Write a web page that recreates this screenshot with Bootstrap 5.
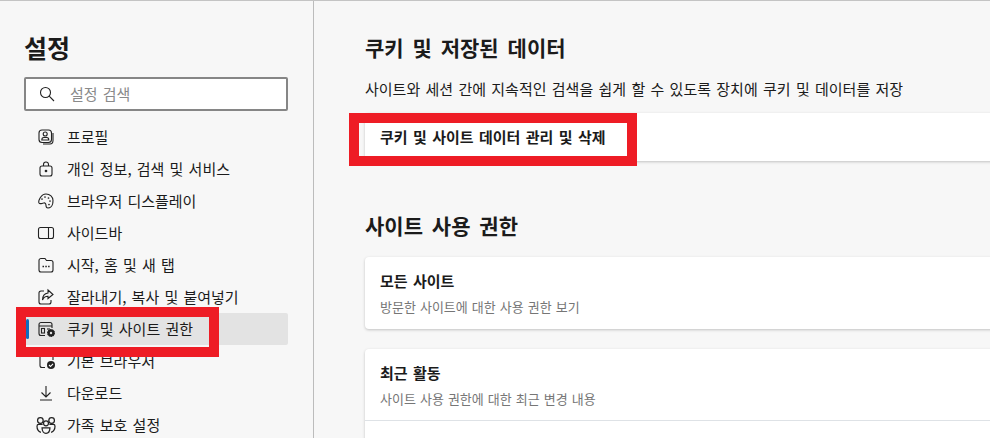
<!DOCTYPE html>
<html lang="ko">
<head>
<meta charset="UTF-8">
<title>설정</title>
<link href="https://cdn.jsdelivr.net/npm/bootstrap@5.3.0/dist/css/bootstrap.min.css" rel="stylesheet">
<style>
    html, body { height: 100%; }
    body {
        background: #f7f7f7;
        color: #1b1b1b;
        font-family: "Noto Sans CJK KR", "Noto Sans", sans-serif;
        overflow: hidden;
        border-top: 1px solid #c4c4c4;
    }
    .shell { height: 437px; overflow: hidden; }
    .side {
        width: 314px;
        flex: none;
        border-right: 1px solid #bcbcbc;
        padding: 28px 25px 0 24px;
    }
    .side-title { font-size: 25px; font-weight: 700; line-height: 36px; margin: 0 0 12px; }
    .search-box {
        height: 34px;
        width: 264px;
        background: #fff;
        border: 2px solid #868686;
        border-radius: 2px;
        padding-left: 13px;
        gap: 15px;
        font-size: 15px;
        word-spacing: 1px;
        color: #8a8a8a;
        margin-bottom: 10px;
    }
    .menu-row {
        height: 32px;
        width: 264px;
        font-size: 15px;
        word-spacing: 1px;
        padding-left: 14px;
        gap: 13px;
        border-radius: 2px;
        position: relative;
    }
    .menu-row svg { flex: none; overflow: visible; }
    .menu-row svg.fam-ico { margin: 0 -1px; }
    .menu-row.active { background: #e3e3e3; }
    .menu-row.active::before {
        content: "";
        position: absolute;
        left: 2px; top: 6px;
        width: 3px; height: 20px;
        background: #0f6cbd;
        border-radius: 2px;
    }
    .ico { fill: none; stroke: #222; stroke-width: 1.1; }
    .main { padding: 31px 0 0 51px; min-width: 0; flex: 1; }
    .sec-title { font-size: 21px; font-weight: 700; line-height: 30px; word-spacing: 3px; margin: 0 0 17px; }
    .sec-desc { font-size: 15px; word-spacing: 1.1px; line-height: 20px; margin: 0 0 14px; white-space: nowrap; }
    .pane {
        background: #fff;
        border-radius: 4px 0 0 4px;
        box-shadow: 0 1px 3px rgba(0,0,0,.22);
        margin-right: -8px;
    }
    .pane-row { padding: 0 15px; }
    .pane-name { font-size: 15px; font-weight: 700; line-height: 20px; word-spacing: 1.2px; }
    .pane-sub { font-size: 13px; color: #767676; line-height: 18px; margin-top: 7px; word-spacing: .4px; }
    .first-row { height: 48px; }
    .second-title { margin-top: 49px; margin-bottom: 17px; }
    .site-row { height: 72px; padding-top: 14px; }
    .recent-pane { margin-top: 20px; }
    .spare-row { height: 40px; }
    .red-mark {
        position: absolute;
        border: 10px solid #ee1c25;
        pointer-events: none;
    }
    .mark-side { left: 16px; top: 306px; width: 203px; height: 50px; }
    .mark-main { left: 349px; top: 112px; width: 288px; height: 53px; }
</style>
</head>
<body>
<div class="shell d-flex position-relative">
    <aside class="side">
        <h1 class="side-title">설정</h1>
        <div class="search-box d-flex align-items-center">
            <svg width="16" height="16" viewBox="0 0 16 16" class="ico"><circle cx="6.5" cy="6.5" r="5"/><path d="M10.2 10.2 15 15"/></svg>
            <span>설정 검색</span>
        </div>
        <div class="menu-row d-flex align-items-center">
            <svg width="16" height="16" viewBox="0 0 16 16" class="ico"><rect x="1" y="1" width="12.5" height="12.500" rx="3"/><circle cx="7.2" cy="5" r="2"/><path d="M3.800 11c0-1.800 1-2.500 2-2.500h3c1 0 2 .7 2 2.500zM15 4v7.500c0 2-1 3.500-3 3.500H5"/></svg>
            <span>프로필</span>
        </div>
        <div class="menu-row d-flex align-items-center">
            <svg width="16" height="16" viewBox="0 0 16 16" class="ico"><rect x="2" y="5" width="12" height="10" rx="2"/><path d="M5.500 5V3.500a2.500 2.500 0 0 1 5 0V5"/><circle cx="8" cy="10" r=".8" fill="#222"/></svg>
            <span>개인 정보, 검색 및 서비스</span>
        </div>
        <div class="menu-row d-flex align-items-center">
            <svg width="16" height="16" viewBox="0 0 16 16" class="ico"><path d="M8 1c4 0 7 3 7 6.500 0 7-4 7.500-5 7.500-2 0-2-1-2-2.500 0-2-1-3-2.500-2.500C3.500 10.300 2 11.500 1 10c-1-2 2-9 7-9z"/><g fill="#222" stroke="none"><circle cx="7" cy="4" r=".85"/><circle cx="10.500" cy="5" r=".85"/><circle cx="12" cy="8" r=".85"/><circle cx="11" cy="11.500" r=".85"/><circle cx="4" cy="6" r=".85"/></g></svg>
            <span>브라우저 디스플레이</span>
        </div>
        <div class="menu-row d-flex align-items-center">
            <svg width="16" height="16" viewBox="0 0 16 16" class="ico"><rect x=".5" y="2.500" width="15" height="11" rx="2"/><path d="M10.500 2.500v11"/></svg>
            <span>사이드바</span>
        </div>
        <div class="menu-row d-flex align-items-center">
            <svg width="16" height="16" viewBox="0 0 16 16" class="ico"><path d="M3 1.500h4l1.500 2H13a2 2 0 0 1 2 2V13a2 2 0 0 1-2 2H3a2 2 0 0 1-2-2V3.500a2 2 0 0 1 2-2z"/><path d="M4.500 9.500h1.500M7.300 9.500h1.500M10.100 9.500h1.500" stroke-width="1.500"/></svg>
            <span>시작, 홈 및 새 탭</span>
        </div>
        <div class="menu-row d-flex align-items-center">
            <svg width="16" height="16" viewBox="0 0 16 16" class="ico"><path d="M6 2H3a2 2 0 0 0-2 2v9a2 2 0 0 0 2 2h8a2 2 0 0 0 2-2v-2"/><path d="M10 1l5 4.500-5 4V7.300C7 7.300 5.500 8.500 4.500 11c0-4 2-6.500 5.500-7z"/></svg>
            <span>잘라내기, 복사 및 붙여넣기</span>
        </div>
        <div class="menu-row active d-flex align-items-center">
            <svg width="16" height="16" viewBox="0 0 16 16" class="ico"><path d="M7 14.500H3a2 2 0 0 1-2-2v-9a2 2 0 0 1 2-2h9a2 2 0 0 1 2 2V7M1 5h13"/><rect x="3.500" y="7.500" width="3" height="4.500"/><path d="M9 8h3"/><circle cx="13" cy="12" r="3.400" fill="#222" stroke="#222" stroke-dasharray="1.500 .6"/><circle cx="13" cy="12" r="1.200" fill="#e3e3e3" stroke="none"/></svg>
            <span>쿠키 및 사이트 권한</span>
        </div>
        <div class="menu-row d-flex align-items-center">
            <svg width="16" height="16" viewBox="0 0 16 16" class="ico"><path d="M7 14.500H4a2 2 0 0 1-2-2v-9a2 2 0 0 1 2-2h9a2 2 0 0 1 2 2V7"/><circle cx="13" cy="12" r="4" fill="#222" stroke="none"/><path d="M11 12l1.500 1.500L15 10.800" stroke="#fff"/></svg>
            <span>기본 브라우저</span>
        </div>
        <div class="menu-row d-flex align-items-center">
            <svg width="16" height="16" viewBox="0 0 16 16" class="ico"><path d="M8 1v10.500M3.500 7.500 8 12l4.500-4.500M2 15h12"/></svg>
            <span>다운로드</span>
        </div>
        <div class="menu-row d-flex align-items-center">
            <svg width="18" height="18" viewBox="0 0 16 16" class="ico fam-ico"><circle cx="3" cy="4" r="2.500"/><circle cx="13" cy="4" r="2.500"/><circle cx="8" cy="6.500" r="2.200"/><path d="M3.500 14.500C2 14 0 12.500 0 9c0-1 .5-1.500 1.500-1.500H5M12.500 14.500c1.500-.5 3.500-2 3.500-5.500 0-1-.5-1.500-1.500-1.500H11M4.500 10.500h7c0 3-1.500 5-3.500 5s-3.500-2-3.500-5z"/></svg>
            <span>가족 보호 설정</span>
        </div>
    </aside>
    <main class="main">
        <h2 class="sec-title">쿠키 및 저장된 데이터</h2>
        <p class="sec-desc">사이트와 세션 간에 지속적인 검색을 쉽게 할 수 있도록 장치에 쿠키 및 데이터를 저장</p>
        <div class="pane">
            <div class="pane-row d-flex align-items-center pane-name first-row">쿠키 및 사이트 데이터 관리 및 삭제</div>
        </div>
        <h2 class="sec-title second-title">사이트 사용 권한</h2>
        <div class="pane">
            <div class="pane-row site-row">
                <div class="pane-name">모든 사이트</div>
                <div class="pane-sub">방문한 사이트에 대한 사용 권한 보기</div>
            </div>
        </div>
        <div class="pane recent-pane">
            <div class="pane-row site-row border-bottom">
                <div class="pane-name">최근 활동</div>
                <div class="pane-sub">사이트 사용 권한에 대한 최근 변경 내용</div>
            </div>
            <div class="spare-row"></div>
        </div>
    </main>
    <div class="red-mark mark-side"></div>
    <div class="red-mark mark-main"></div>
</div>
<script src="https://cdn.jsdelivr.net/npm/bootstrap@5.3.0/dist/js/bootstrap.bundle.min.js"></script>
</body>
</html>
